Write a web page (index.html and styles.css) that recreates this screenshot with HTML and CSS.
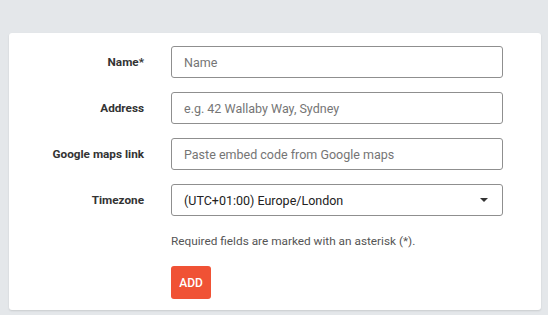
FILE: index.html
```html
<!DOCTYPE html>
<html>
<head>
<meta charset="utf-8">
<link rel="stylesheet" href="styles.css">
</head>
<body>
<div class="card">
  <form class="form">
    <label class="label">Name*</label>
    <input class="control" type="text" placeholder="Name">
    <label class="label">Address</label>
    <input class="control" type="text" placeholder="e.g. 42 Wallaby Way, Sydney">
    <label class="label">Google maps link</label>
    <input class="control" type="text" placeholder="Paste embed code from Google maps">
    <label class="label">Timezone</label>
    <div class="select">
      <span>(UTC+01:00) Europe/London</span>
      <svg class="caret" width="8" height="4" viewBox="0 0 8 4"><path d="M0 0h8L4 4z" fill="#333"/></svg>
    </div>
    <div></div>
    <p class="help">Required fields are marked with an asterisk (*).</p>
    <div></div>
    <div><button class="btn" type="button">ADD</button></div>
  </form>
</div>
</body>
</html>
```
FILE: styles.css
```css
* { box-sizing: border-box; }
html, body { margin: 0; padding: 0; }
body {
  background: #e4e7ea;
  font-family: Roboto, "Liberation Sans", sans-serif;
  padding: 33px 8px 0 9px;
  height: 315px;
  overflow: hidden;
}
.card {
  background: #fff;
  width: 532px;
  height: 277px;
  border-radius: 3px;
  box-shadow: 0 1px 2px rgba(0,0,0,0.12);
  padding: 13px 0 0 0;
}
.form {
  display: grid;
  grid-template-columns: 135px 332px;
  column-gap: 27px;
  row-gap: 14px;
  align-items: center;
}
.label {
  text-align: right;
  font-size: 11.75px;
  font-weight: 700;
  color: #333;
}
.control, .select {
  height: 32px;
  width: 332px;
  border: 1px solid #8f8f8f;
  border-radius: 3px;
  padding: 0 12px;
  font-family: Roboto, "Liberation Sans", sans-serif;
  font-size: 12.5px;
  color: #333;
  background: #fff;
  outline: none;
}
.control::placeholder { color: #757575; }
.select {
  display: flex;
  align-items: center;
  justify-content: space-between;
  padding-right: 14px;
  color: #222;
}
.help {
  margin: 0;
  font-size: 11.8px;
  color: #555;
  line-height: 16px;
  margin-top: 3px;
}
.btn {
  background: #f05235;
  color: #fff;
  border: none;
  border-radius: 3px;
  width: 40px;
  height: 33px;
  font-family: Roboto, "Liberation Sans", sans-serif;
  font-size: 12px;
  font-weight: 500;
  padding: 0;
  margin-top: 3px;
}
```
